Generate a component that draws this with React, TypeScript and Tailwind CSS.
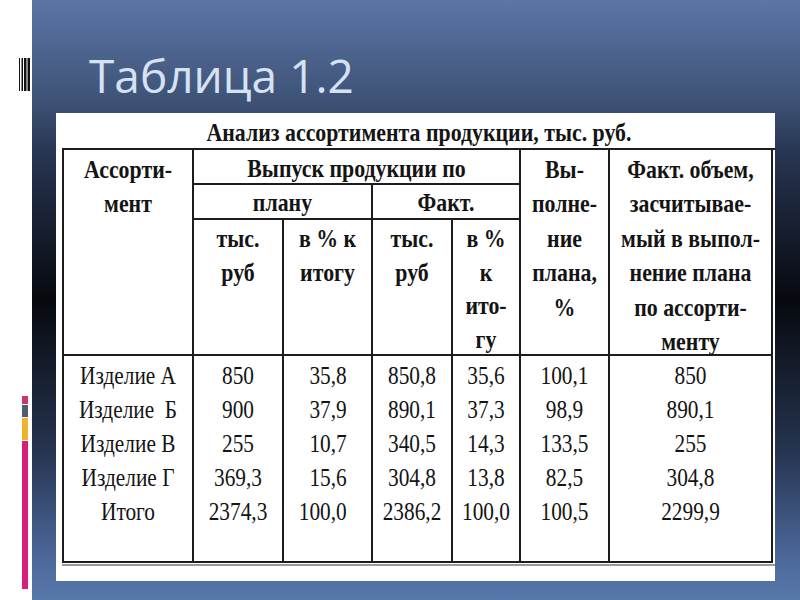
const head = [
  { col: "col-start-1 row-span-3", lines: ["Ассорти-", "мент"], cls: "pt-[3px] leading-[34.4px]" },
  { col: "col-span-4", lines: ["Выпуск продукции по"], cls: "pt-[2px] leading-[33px]" },
  { col: "col-start-6 row-span-3 row-start-1", lines: ["Вы-", "полне-", "ние", "плана,", "%"], cls: "pt-[3px] leading-[34.4px]" },
  {
    col: "col-start-7 row-span-3 row-start-1",
    lines: ["Факт. объем,", "засчитывае-", "мый в выпол-", "нение плана", "по ассорти-", "менту"],
    cls: "pt-[3px] leading-[34.4px]",
  },
  { col: "col-start-2 col-span-2 row-start-2", lines: ["плану"], cls: "pt-[1px] leading-[33px]" },
  { col: "col-start-4 col-span-2 row-start-2", lines: ["Факт."], cls: "pt-[1px] leading-[33px]" },
  { col: "col-start-2 row-start-3", lines: ["тыс.", "руб"], cls: "pt-[2px] leading-[33.5px]" },
  { col: "col-start-3 row-start-3", lines: ["в % к", "итогу"], cls: "pt-[2px] leading-[33.5px]" },
  { col: "col-start-4 row-start-3", lines: ["тыс.", "руб"], cls: "pt-[2px] leading-[33.5px]" },
  { col: "col-start-5 row-start-3", lines: ["в %", "к", "ито-", "гу"], cls: "pt-[2px] leading-[33.5px]" },
];

const body = [
  { lines: ["Изделие А", "Изделие  Б", "Изделие В", "Изделие Г", "Итого"], align: "items-center" },
  { lines: ["850", "900", "255", "369,3", "2374,3"], align: "items-center" },
  { lines: ["35,8", "37,9", "10,7", "15,6", "100,0"], align: "items-end pr-[20px]" },
  { lines: ["850,8", "890,1", "340,5", "304,8", "2386,2"], align: "items-center" },
  { lines: ["35,6", "37,3", "14,3", "13,8", "100,0"], align: "items-center" },
  { lines: ["100,1", "98,9", "133,5", "82,5", "100,5"], align: "items-center" },
  { lines: ["850", "890,1", "255", "304,8", "2299,9"], align: "items-center" },
];

const Table = () => {
  return (
    <div className="grid grid-cols-[130px_90px_89px_80px_68px_89px_163px] grid-rows-[35px_35px_136px_207px] border-l-2 border-t-2 border-[#1d1d1d] text-[26px] text-[#141414] font-['Liberation_Serif',serif]">
      {head.map((h, i) => (
        <div key={i} className={`${h.col} border-b-2 border-r-2 border-[#1d1d1d] font-bold ${h.cls}`}>
          <div className="flex scale-x-[0.84] flex-col items-center whitespace-nowrap">
            {h.lines.map((l, j) => (
              <span key={j}>{l}</span>
            ))}
          </div>
        </div>
      ))}
      {body.map((c, i) => (
        <div key={i} className="row-start-4 border-b-2 border-r-2 border-[#1d1d1d] pt-[3px] leading-[34px]">
          <div className={`flex scale-x-[0.82] flex-col whitespace-pre ${c.align}`}>
            {c.lines.map((l, j) => (
              <span key={j}>{l}</span>
            ))}
          </div>
        </div>
      ))}
    </div>
  );
};

const App = () => {
  return (
    <div className="flex h-[600px] w-[800px] bg-white">
      <div className="flex w-[32px] flex-col">
        <svg className="ml-[19px] mt-[58px]" width="13" height="33" viewBox="0 0 13 33">
          <rect x="0" y="0" width="1" height="33" fill="#111" />
          <rect x="2.5" y="0" width="1.5" height="33" fill="#111" />
          <rect x="5" y="0" width="2.5" height="33" fill="#111" />
          <rect x="8.5" y="0" width="2.5" height="33" fill="#111" />
        </svg>
        <div className="ml-[22px] mt-[305px] flex w-[6px] flex-col gap-[1px]">
          <div className="h-[8px] bg-[#c8366e]" />
          <div className="h-[12px] bg-[#4f5e6c]" />
          <div className="h-[22px] bg-[#edb52c]" />
          <div className="h-[148px] bg-[#d81f79]" />
        </div>
      </div>
      <div className="h-full flex-1 bg-[linear-gradient(180deg,#5b75a6_0%,#3e5276_17%,#283653_25%,#07090e_50%,#263450_75%,#4a6697_92%,#5878ab_100%)]">
        <h1 className="pl-[57px] pt-[52px] font-['Open_Sans',sans-serif] text-[46px] leading-none text-[#d6e2f2]">
          Таблица 1.2
        </h1>
        <div className="ml-[24px] mt-[15px] h-[468px] w-[719px] bg-white pl-[6px] pt-[5px]">
          <div className="flex h-[30px] w-[713px] justify-center font-['Liberation_Serif',serif] text-[26px] font-bold leading-[30px] text-[#141414]">
            <span className="inline-block scale-x-[0.84] whitespace-nowrap">
              Анализ ассортимента продукции, тыс. руб.
            </span>
          </div>
          <Table />
          <div className="mt-[1px] h-[2px] w-[713px] bg-[#9a9a9a]" />
        </div>
      </div>
    </div>
  );
};

export default App;
